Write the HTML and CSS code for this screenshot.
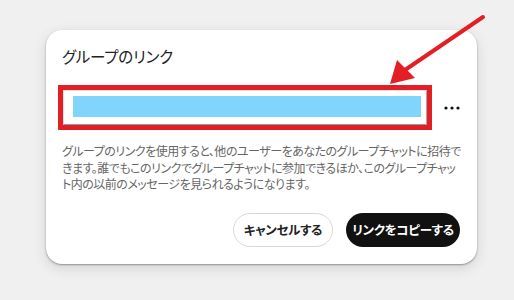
FILE: index.html
```html
<!DOCTYPE html>
<html lang="ja">
<head>
    <meta charset="UTF-8">
    <meta name="viewport" content="width=device-width, initial-scale=1.0">
    <title>グループのリンク</title>
    <link rel="stylesheet" href="styles.css">
</head>
<body>
    <div class="dialogo">
        <h2 class="dialogo_titulo">グループのリンク</h2>
        <div class="dialogo_linha">
            <div class="marcacao">
                <div class="campo-link">
                    <div class="campo-link_valor"></div>
                </div>
            </div>
            <button class="mais" aria-label="その他">
                <svg width="16" height="4" viewBox="0 0 16 4"><circle cx="2" cy="2" r="1.6" fill="#111"/><circle cx="8" cy="2" r="1.6" fill="#111"/><circle cx="14" cy="2" r="1.6" fill="#111"/></svg>
            </button>
        </div>
        <p class="dialogo_texto">グループのリンクを使用すると、他のユーザーをあなたのグループチャットに招待できます。誰でもこのリンクでグループチャットに参加できるほか、このグループチャット内の以前のメッセージを見られるようになります。</p>
        <div class="dialogo_botoes">
            <button class="botao botao-cancelar">キャンセルする</button>
            <button class="botao botao-copiar">リンクをコピーする</button>
        </div>
    </div>

    <svg class="seta" width="514" height="100" viewBox="0 0 514 100">
        <line x1="483" y1="17" x2="405" y2="70" stroke="#e31e24" stroke-width="4" stroke-linecap="round"/>
        <polygon points="390,84 397,60 415,78" fill="#e31e24"/>
    </svg>
</body>
</html>
```

FILE: styles.css
```css
*{border: 0;margin: 0;padding: 0;box-sizing: border-box;}
body{
    width: 514px;
    height: 300px;
    overflow: hidden;
    background: #f0f0f0;
    font-family: 'Noto Sans CJK JP', sans-serif;
    font-feature-settings: "palt";
    position: relative;
}
.dialogo{
    margin: 30px 0 0 46px;
    width: 431px;
    height: 234px;
    background: #fff;
    border-radius: 16px;
    padding: 15px 17px 16px 16px;
    box-shadow: 0 1px 2px rgba(0, 0, 0, 0.35), 0 4px 14px rgba(0, 0, 0, 0.12);
}
.dialogo_titulo{
    font-size: 15.5px;
    font-weight: normal;
    color: #222;
    line-height: 22px;
    letter-spacing: -0.2px;
}
.dialogo_linha{
    display: flex;
    align-items: center;
    margin: 18px 0 0 -4px;
}
.marcacao{
    width: 375px;
    height: 45px;
    border: 5px solid #e31e24;
}
.campo-link{
    height: 100%;
    border: 1px solid #e2e2e2;
    border-bottom-color: #999;
    border-right-color: #aaa;
    padding: 5px 5px 7px 9px;
}
.campo-link_valor{
    height: 100%;
    background: #81d4fb;
}
.mais{
    background: none;
    margin-left: 12px;
    display: flex;
    align-items: center;
    cursor: pointer;
}
.dialogo_texto{
    margin-top: 13px;
    font-size: 12px;
    line-height: 16.5px;
    color: #666;
    width: 400px;
    letter-spacing: -0.5px;
}
.dialogo_botoes{
    display: flex;
    justify-content: flex-end;
    gap: 13px;
    margin-top: 20px;
}
.botao{
    height: 34px;
    border-radius: 17px;
    font-family: inherit;
    font-feature-settings: "palt";
    font-size: 12.5px;
    font-weight: bold;
    letter-spacing: -0.3px;
    cursor: pointer;
}
.botao-cancelar{
    width: 100px;
    background: #fff;
    border: 1.5px solid #d8d8d8;
    color: #222;
}
.botao-copiar{
    width: 114px;
    background: #111;
    color: #fff;
}
.seta{
    position: absolute;
    top: 0;
    left: 0;
}
```
